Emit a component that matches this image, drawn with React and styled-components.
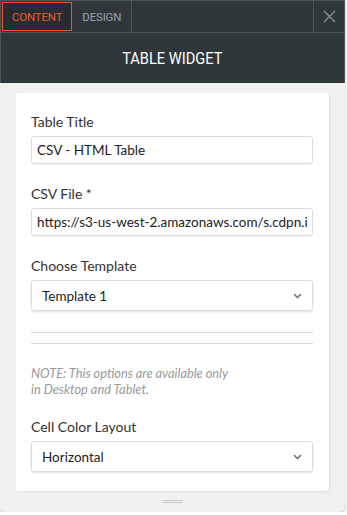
import styled, { createGlobalStyle } from 'styled-components';

const GlobalStyle = createGlobalStyle`
  body {
    margin: 0;
    background: #fff;
    font-family: Lato, "Open Sans", sans-serif;
  }
`;

const Panel = styled.section`
  width: 345px;
  background: #f0f0f0;
  border-radius: 0 0 5px 5px;
  box-shadow: 0 1px 3px rgba(0, 0, 0, 0.28);
  overflow: hidden;
`;

const Header = styled.header`
  background: #30373b;
  border: 1px solid #4d555a;
  border-bottom: none;
`;

const TabBar = styled.nav`
  display: flex;
  height: 31px;
  border-bottom: 1px solid #4d555a;
`;

const Tab = styled.button`
  display: flex;
  align-items: center;
  justify-content: center;
  height: ${(p) => (p.$active ? '29px' : '31px')};
  margin: ${(p) => (p.$active ? '1px 0 0 1px' : '0')};
  padding: 0 ${(p) => (p.$active ? '9px' : '10px')};
  background: ${(p) => (p.$active ? '#262c30' : 'transparent')};
  border: ${(p) => (p.$active ? '1px solid #e8552c' : 'none')};
  border-right: 1px solid ${(p) => (p.$active ? '#e8552c' : '#4d555a')};
  color: ${(p) => (p.$active ? '#ec5a30' : '#98a3ab')};
  font-family: Roboto, "Liberation Sans", sans-serif;
  font-size: 11.5px;
  letter-spacing: -0.2px;
  cursor: pointer;
`;

const Spacer = styled.div`
  flex: 1;
`;

const Close = styled.button`
  width: 31px;
  display: flex;
  align-items: center;
  justify-content: center;
  background: transparent;
  border: none;
  border-left: 1px solid #4d555a;
  padding: 0;
`;

const Title = styled.h1`
  margin: 0;
  height: 50px;
  display: flex;
  align-items: center;
  justify-content: center;
  color: #fff;
  font-family: Roboto, sans-serif;
  font-weight: 400;
  font-size: 17px;

  span {
    display: inline-block;
    transform: scaleX(0.86);
  }
`;

const Body = styled.div`
  padding: 10px 16px 0 16px;
`;

const Card = styled.div`
  background: #fff;
  border-radius: 3px;
  box-shadow: 1px 1px 2px rgba(0, 0, 0, 0.08);
  padding: 20px 16px 19px 15px;
`;

const Field = styled.div`
  margin-bottom: ${(p) => (p.$last ? '0' : '21px')};
`;

const Label = styled.label`
  display: block;
  color: #333;
  font-size: 14px;
  line-height: 18px;
  margin-bottom: 5px;
`;

const Input = styled.input`
  box-sizing: border-box;
  width: 100%;
  height: 28px;
  border: 1px solid #d5dadd;
  border-radius: 3px;
  padding: 0 5px;
  font-family: Lato, sans-serif;
  font-size: 13.5px;
  color: #222;
  box-shadow: 0 1px 1px rgba(0, 0, 0, 0.04);
  outline: none;
`;

const Select = styled.div`
  box-sizing: border-box;
  height: 31px;
  display: flex;
  align-items: center;
  justify-content: space-between;
  border: 1px solid #d8dde0;
  border-radius: 3px;
  padding: 0 10px 0 10px;
  font-size: 13.5px;
  color: #222;
  box-shadow: 0 1px 2px rgba(0, 0, 0, 0.12);
`;

const Rule = styled.hr`
  margin: 0;
  border: none;
  border-top: 1px solid #d3d8db;
`;

const Rules = styled.div`
  display: flex;
  flex-direction: column;
  gap: 10px;
  margin-bottom: 21px;
`;

const Note = styled.p`
  margin: 0 0 21px;
  color: #999;
  font-style: italic;
  font-size: 12.8px;
  line-height: 16px;
`;

const Handle = styled.div`
  height: 21px;
  display: flex;
  align-items: center;
  justify-content: center;

  &::before {
    content: '';
    width: 20px;
    height: 1px;
    border-top: 1px solid #c9c9c9;
    border-bottom: 1px solid #c9c9c9;
  }
`;

const Chevron = () => (
  <svg width="9" height="6" viewBox="0 0 9 6">
    <path d="M1 1l3.5 3.5L8 1" fill="none" stroke="#6d7780" strokeWidth="1.6" />
  </svg>
);

const App = () => (
  <>
    <GlobalStyle />
    <Panel>
      <Header>
        <TabBar>
          <Tab $active>CONTENT</Tab>
          <Tab>DESIGN</Tab>
          <Spacer />
          <Close aria-label="close">
            <svg width="13" height="13" viewBox="0 0 13 13">
              <path d="M1 1l11 11M12 1L1 12" stroke="#8a949b" strokeWidth="1.3" />
            </svg>
          </Close>
        </TabBar>
        <Title>
          <span>TABLE WIDGET</span>
        </Title>
      </Header>
      <Body>
        <Card>
          <Field>
            <Label>Table Title</Label>
            <Input defaultValue="CSV - HTML Table" />
          </Field>
          <Field>
            <Label>CSV File *</Label>
            <Input defaultValue="https://s3-us-west-2.amazonaws.com/s.cdpn.io/162656/data.csv" />
          </Field>
          <Field>
            <Label>Choose Template</Label>
            <Select>
              <span>Template 1</span>
              <Chevron />
            </Select>
          </Field>
          <Rules>
            <Rule />
            <Rule />
          </Rules>
          <Note>
            NOTE: This options are available only
            <br />
            in Desktop and Tablet.
          </Note>
          <Field $last>
            <Label>Cell Color Layout</Label>
            <Select>
              <span>Horizontal</span>
              <Chevron />
            </Select>
          </Field>
        </Card>
      </Body>
      <Handle />
    </Panel>
  </>
);

export default App;
